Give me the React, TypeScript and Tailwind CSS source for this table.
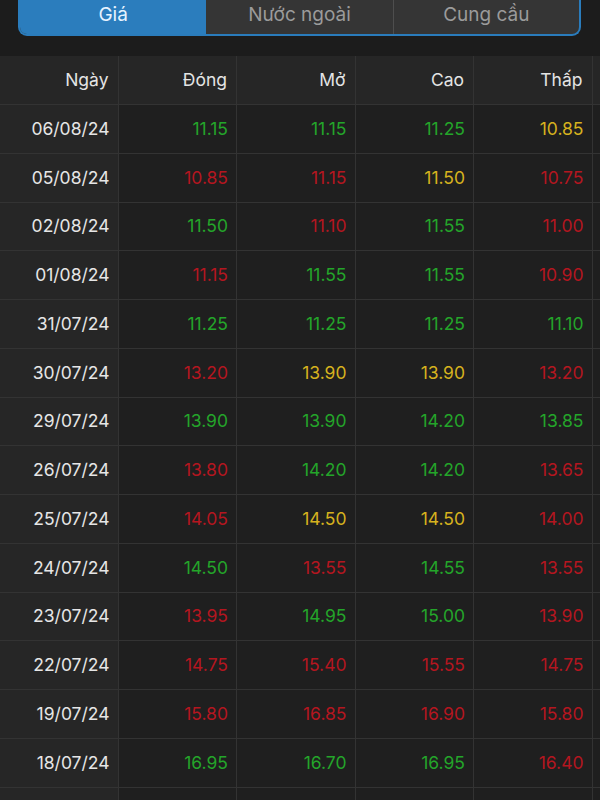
import React from "react";

type Tone = "g" | "r" | "y";

interface PriceRow {
  date: string;
  cells: [string, Tone][];
}

const rows: PriceRow[] = [
  { date: "06/08/24", cells: [["11.15", "g"], ["11.15", "g"], ["11.25", "g"], ["10.85", "y"]] },
  { date: "05/08/24", cells: [["10.85", "r"], ["11.15", "r"], ["11.50", "y"], ["10.75", "r"]] },
  { date: "02/08/24", cells: [["11.50", "g"], ["11.10", "r"], ["11.55", "g"], ["11.00", "r"]] },
  { date: "01/08/24", cells: [["11.15", "r"], ["11.55", "g"], ["11.55", "g"], ["10.90", "r"]] },
  { date: "31/07/24", cells: [["11.25", "g"], ["11.25", "g"], ["11.25", "g"], ["11.10", "g"]] },
  { date: "30/07/24", cells: [["13.20", "r"], ["13.90", "y"], ["13.90", "y"], ["13.20", "r"]] },
  { date: "29/07/24", cells: [["13.90", "g"], ["13.90", "g"], ["14.20", "g"], ["13.85", "g"]] },
  { date: "26/07/24", cells: [["13.80", "r"], ["14.20", "g"], ["14.20", "g"], ["13.65", "r"]] },
  { date: "25/07/24", cells: [["14.05", "r"], ["14.50", "y"], ["14.50", "y"], ["14.00", "r"]] },
  { date: "24/07/24", cells: [["14.50", "g"], ["13.55", "r"], ["14.55", "g"], ["13.55", "r"]] },
  { date: "23/07/24", cells: [["13.95", "r"], ["14.95", "g"], ["15.00", "g"], ["13.90", "r"]] },
  { date: "22/07/24", cells: [["14.75", "r"], ["15.40", "r"], ["15.55", "r"], ["14.75", "r"]] },
  { date: "19/07/24", cells: [["15.80", "r"], ["16.85", "r"], ["16.90", "r"], ["15.80", "r"]] },
  { date: "18/07/24", cells: [["16.95", "g"], ["16.70", "g"], ["16.95", "g"], ["16.40", "r"]] },
  // next row is only partly on screen, its text is below the edge
  { date: "", cells: [["", "g"], ["", "g"], ["", "g"], ["", "g"]] },
];

const toneClass: Record<Tone, string> = {
  g: "text-[#24a52a]",
  r: "text-[#b4161f]",
  y: "text-[#d6b21e]",
};

const headers = ["Ngày", "Đóng", "Mở", "Cao", "Thấp"];

export default function App() {
  return (
    <div className="w-[600px] h-[800px] overflow-hidden bg-[#1c1c1c] font-['Inter','Noto_Sans',sans-serif]">
      {/* segmented tabs, top edge cut off by the screen */}
      <div className="h-[56px] px-[18px]">
        <div className="h-[36px] grid grid-cols-3 w-[563px] border-2 border-t-0 border-[#2a7cbc] rounded-b-[9px] overflow-hidden bg-[#353535] text-[19px] leading-none">
          <div className="flex items-center justify-center pb-[6px] bg-[#2b7dbd] text-[#e6f3ff]">Giá</div>
          <div className="flex items-center justify-center pb-[6px] text-[#9b9b9b]">Nước ngoài</div>
          <div className="flex items-center justify-center pb-[6px] text-[#9b9b9b] border-l border-[#4e4e4e]">Cung cầu</div>
        </div>
      </div>

      <div className="w-[720px] text-[17.5px]">
        <div className="flex h-[49px] bg-[#262626] text-[#e4e4e4]">
          {headers.map((h) => (
            <div key={h} className="w-[118.5px] shrink-0 flex items-center justify-end pr-[9px] border-r border-b border-[#333333]">
              {h}
            </div>
          ))}
          <div className="w-[118.5px] shrink-0 border-b border-[#333333]" />
        </div>

        {rows.map((row, r) => (
          <div key={r} className="flex h-[48.75px]">
            <div className="w-[118.5px] shrink-0 flex items-center justify-end pr-[8px] bg-[#262626] text-[#e6e6e6] border-r border-b border-[#333333]">
              {row.date}
            </div>
            {row.cells.map(([v, t], i) => (
              <div
                key={i}
                className={`w-[118.5px] shrink-0 flex items-center justify-end pr-[8px] bg-[#1f1f1f] border-r border-b border-[#333333] ${toneClass[t]}`}
              >
                {v}
              </div>
            ))}
            <div className="w-[118.5px] shrink-0 bg-[#1f1f1f] border-b border-[#333333]" />
          </div>
        ))}
      </div>
    </div>
  );
}
